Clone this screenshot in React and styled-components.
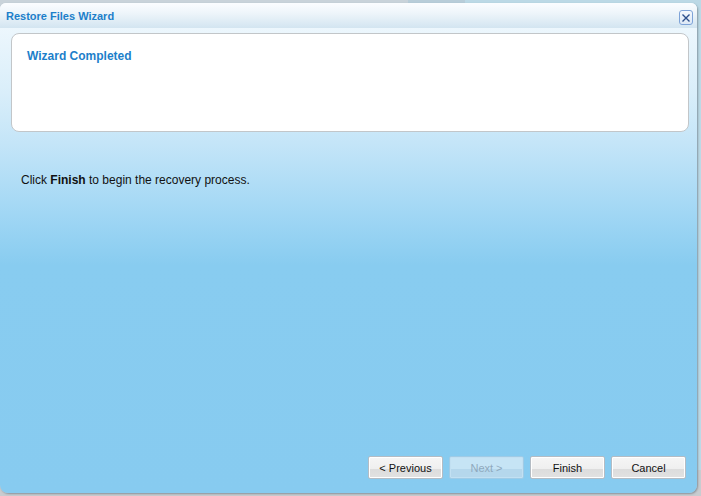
import React from "react";
import styled, { createGlobalStyle } from "styled-components";

const Global = createGlobalStyle`
  html, body { margin: 0; padding: 0; }
  *, *::before, *::after { box-sizing: border-box; }
  body {
    width: 701px;
    height: 496px;
    overflow: hidden;
    background: linear-gradient(to right, #c9d3da 0, #c9d3da 408px, #b8cdd9 408px, #b8cdd9 465px, #bcd9e6 465px);
    font-family: "Liberation Sans", Arial, sans-serif;
  }
`;

const Page = styled.div`
  width: 701px;
  height: 496px;
  padding-top: 3px;
  background: linear-gradient(to bottom, transparent 0, transparent 470px, #c8ccd0 470px);
`;

const Window = styled.div`
  width: 697px;
  height: 490px;
  border-radius: 6px 6px 8px 8px;
  overflow: hidden;
  display: flex;
  flex-direction: column;
  box-shadow: 1px 1px 2px rgba(90, 100, 110, 0.55);
  background: linear-gradient(
    to bottom,
    #f4fafe 0px,
    #d9eefa 90px,
    #c4e5f8 140px,
    #a6d9f5 200px,
    #88ccf0 262px,
    #87cbf0 100%
  );
`;

const TitleBar = styled.div`
  height: 25px;
  flex: none;
  display: flex;
  align-items: center;
  justify-content: space-between;
  padding: 0 4px 0 6px;
  background: linear-gradient(to bottom, #fbfdff 0%, #eef5fa 40%, #d3e5f1 100%);
`;

const Title = styled.span`
  font-size: 11px;
  font-weight: bold;
  color: #1d7fca;
  margin-top: 1px;
`;

const CloseButton = styled.button`
  width: 14px;
  height: 15px;
  padding: 0;
  margin-top: 4px;
  border: 1px solid #7ea3d8;
  border-radius: 3px;
  background: linear-gradient(to bottom, #f4f8fd, #dde8f6);
  display: flex;
  align-items: center;
  justify-content: center;
  cursor: pointer;
`;

const Body = styled.div`
  flex: 1;
  display: flex;
  flex-direction: column;
  padding: 5px 8px 14px 11px;
`;

const Panel = styled.div`
  height: 99px;
  flex: none;
  background: #ffffff;
  border: 1px solid #c2c6c9;
  border-radius: 8px;
  padding: 15px 15px 0 15px;
`;

const PanelTitle = styled.div`
  font-size: 12px;
  font-weight: bold;
  color: #1d7fca;
`;

const Message = styled.p`
  margin: 41px 0 0 10px;
  font-size: 12px;
  color: #111;
  line-height: 14px;
`;

const Spacer = styled.div`
  flex: 1;
`;

const ButtonRow = styled.div`
  display: flex;
  justify-content: flex-end;
  gap: 6px;
  padding-right: 3px;
`;

const WizButton = styled.button`
  width: 75px;
  height: 23px;
  padding: 0;
  border: 1px solid ${(p) => (p.disabled ? "#9fcbe6" : "#b4bcc4")};
  box-shadow: inset 0 0 0 1px ${(p) => (p.disabled ? "#c2e0f2" : "#ffffff")};
  border-radius: 2px;
  font-family: "Liberation Sans", Arial, sans-serif;
  font-size: 11px;
  color: ${(p) => (p.disabled ? "#8fa9bd" : "#111")};
  background: ${(p) =>
    p.disabled
      ? "linear-gradient(to bottom, #c6e4f5 0%, #c6e4f5 55%, #b5d7ec 55%, #b5d7ec 100%)"
      : "linear-gradient(to bottom, #f6f6f6 0%, #efefef 55%, #dcdcdc 55%, #e2e2e2 100%)"};
  cursor: ${(p) => (p.disabled ? "default" : "pointer")};
`;

export default function App() {
  return (
    <>
      <Global />
      <Page>
        <Window>
          <TitleBar>
            <Title>Restore Files Wizard</Title>
            <CloseButton aria-label="Close">
              <svg width="8" height="8" viewBox="0 0 8 8">
                <path d="M0.5 0.5 L7.5 7.5 M7.5 0.5 L0.5 7.5" stroke="#2c4f8c" strokeWidth="1.4" />
              </svg>
            </CloseButton>
          </TitleBar>
          <Body>
            <Panel>
              <PanelTitle>Wizard Completed</PanelTitle>
            </Panel>
            <Message>
              Click <b>Finish</b> to begin the recovery process.
            </Message>
            <Spacer />
            <ButtonRow>
              <WizButton>&lt; Previous</WizButton>
              <WizButton disabled>Next &gt;</WizButton>
              <WizButton>Finish</WizButton>
              <WizButton>Cancel</WizButton>
            </ButtonRow>
          </Body>
        </Window>
      </Page>
    </>
  );
}
